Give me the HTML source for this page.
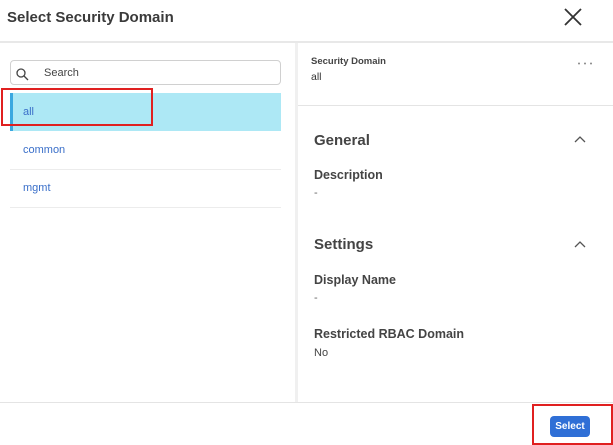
<!DOCTYPE html>
<html><head><style>
*{margin:0;padding:0;box-sizing:border-box}
body{width:613px;height:445px;background:#fff;font-family:"Liberation Sans",sans-serif;position:relative;overflow:hidden;color:#333}
.a{position:absolute;white-space:nowrap}
</style></head><body>
<div class="a" style="left:7px;top:9px;font-size:15px;font-weight:bold;color:#3a3a3a">Select Security Domain</div>
<svg class="a" style="left:564px;top:8px" width="18" height="18"><path d="M1 1L17 17M17 1L1 17" stroke="#333" stroke-width="1.8"/></svg>
<div class="a" style="left:0;top:41px;width:613px;height:2px;background:#e8e8e8"></div>
<div class="a" style="left:295px;top:43px;width:3px;height:359px;background:#f0f0f0"></div>
<div class="a" style="left:298px;top:105px;width:315px;height:1px;background:#e4e4e4"></div>
<div class="a" style="left:0;top:402px;width:613px;height:1px;background:#e4e4e4"></div>
<div class="a" style="left:10px;top:60px;width:271px;height:25px;border:1px solid #d0d0d0;border-radius:4px"></div>
<svg class="a" style="left:16px;top:68px" width="13" height="13"><circle cx="5" cy="5" r="4" stroke="#444" stroke-width="1.3" fill="none"/><path d="M8 8L12 12" stroke="#444" stroke-width="1.3"/></svg>
<div class="a" style="left:44px;top:67px;font-size:11px;color:#444">Search</div>
<div class="a" style="left:10px;top:93px;width:271px;height:38px;background:#ade8f5"></div>
<div class="a" style="left:10px;top:93px;width:3px;height:38px;background:#3aa8e0"></div>
<div class="a" style="left:23px;top:106px;font-size:11px;color:#3a6fc9">all</div>
<div class="a" style="left:1px;top:88px;width:152px;height:38px;border:2px solid #e02020"></div>
<div class="a" style="left:23px;top:144px;font-size:11px;color:#3a6fc9">common</div>
<div class="a" style="left:10px;top:169px;width:271px;height:1px;background:#ececec"></div>
<div class="a" style="left:23px;top:182px;font-size:11px;color:#3a6fc9">mgmt</div>
<div class="a" style="left:10px;top:207px;width:271px;height:1px;background:#ececec"></div>
<div class="a" style="left:311px;top:56px;font-size:9.5px;font-weight:bold;color:#444">Security Domain</div>
<div class="a" style="left:311px;top:71px;font-size:10.5px;color:#333">all</div>
<svg class="a" style="left:577px;top:62px" width="16" height="3"><circle cx="2" cy="1.5" r="1" fill="#888"/><circle cx="8" cy="1.5" r="1" fill="#888"/><circle cx="14" cy="1.5" r="1" fill="#888"/></svg>
<div class="a" style="left:314px;top:132px;font-size:15px;font-weight:bold;color:#444">General</div>
<svg class="a" style="left:574px;top:135px" width="12" height="8"><path d="M1 7L6 2L11 7" stroke="#555" stroke-width="1.3" fill="none"/></svg>
<div class="a" style="left:314px;top:168px;font-size:12.5px;font-weight:bold;color:#444">Description</div>
<div class="a" style="left:314px;top:187px;font-size:11px;color:#666">-</div>
<div class="a" style="left:314px;top:236px;font-size:15px;font-weight:bold;color:#444">Settings</div>
<svg class="a" style="left:574px;top:240px" width="12" height="8"><path d="M1 7L6 2L11 7" stroke="#555" stroke-width="1.3" fill="none"/></svg>
<div class="a" style="left:314px;top:273px;font-size:12.5px;font-weight:bold;color:#444">Display Name</div>
<div class="a" style="left:314px;top:292px;font-size:11px;color:#666">-</div>
<div class="a" style="left:314px;top:327px;font-size:12.5px;font-weight:bold;color:#444">Restricted RBAC Domain</div>
<div class="a" style="left:314px;top:347px;font-size:11px;color:#444">No</div>
<div class="a" style="left:550px;top:416px;width:40px;height:21px;background:#2f6fd6;border-radius:4px;color:#fff;font-size:10px;font-weight:bold;text-align:center;line-height:22px">Select</div>
<div class="a" style="left:532px;top:404px;width:81px;height:41px;border:2px solid #e02020"></div>
</body></html>
